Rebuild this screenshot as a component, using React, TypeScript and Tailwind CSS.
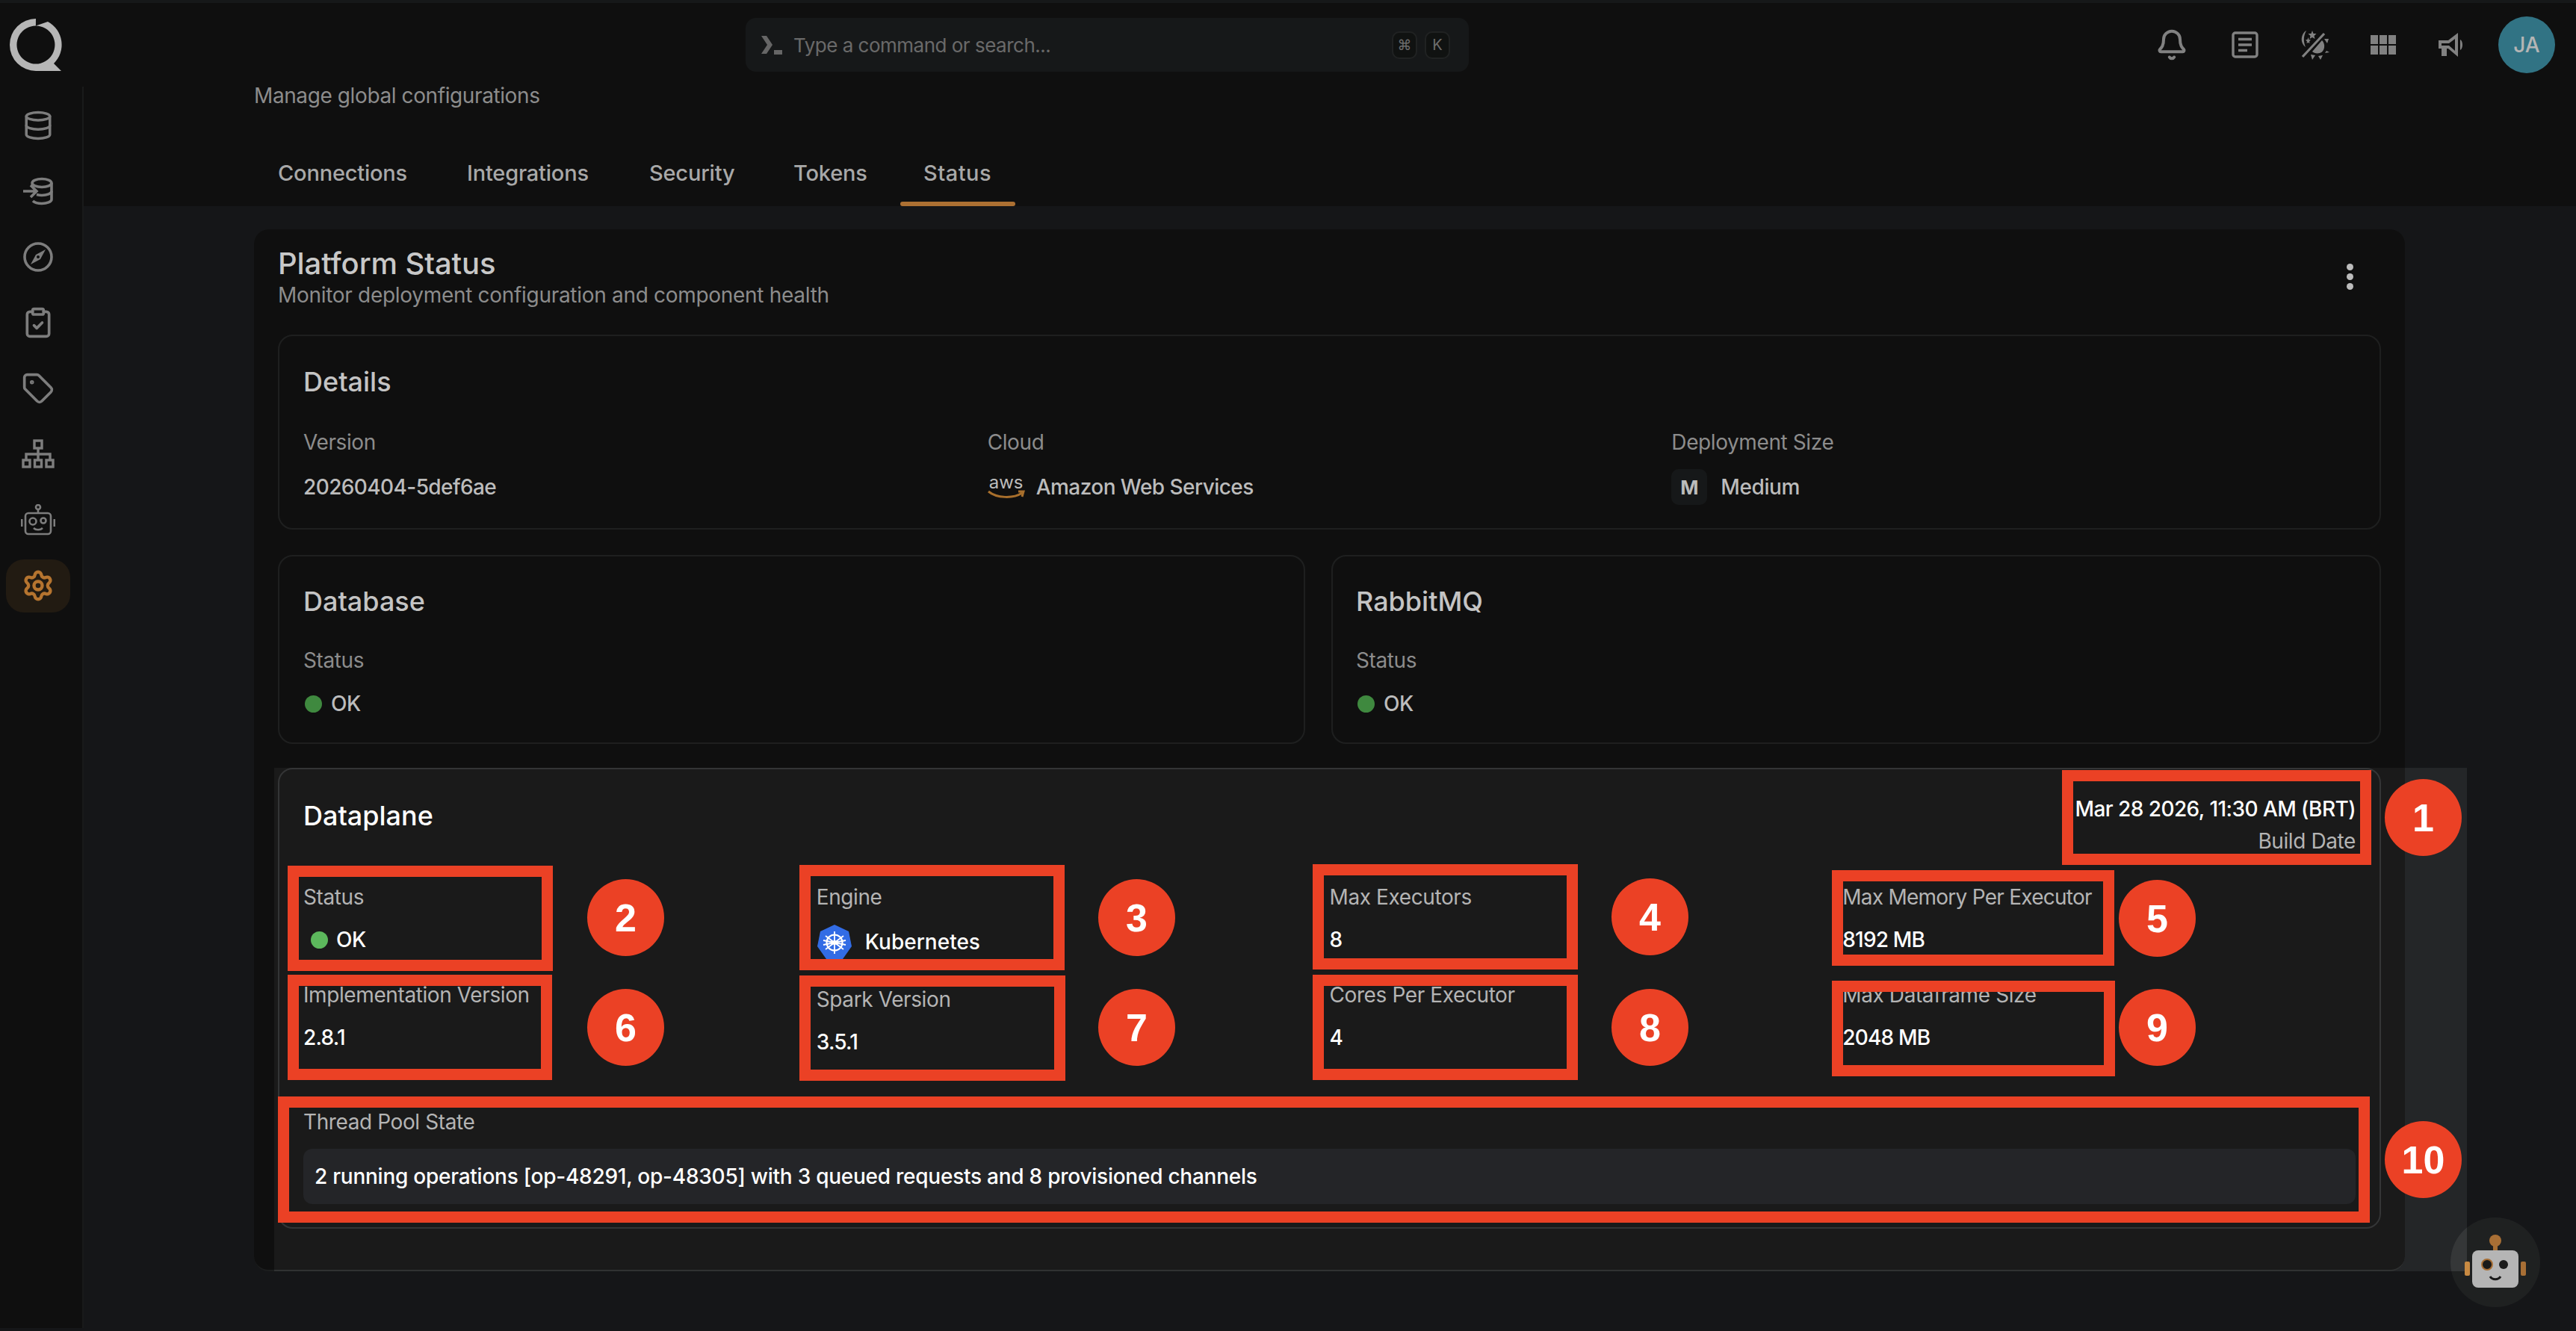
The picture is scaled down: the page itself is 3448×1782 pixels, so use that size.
import { Settings, Bell, ClipboardCheck, Tag, Database } from "lucide-react";

const boxes = [
  "left-[2760px] top-[1031px] w-[414px] h-[127px]",
  "left-[385px] top-[1159px] w-[355px] h-[141px]",
  "left-[1070px] top-[1158px] w-[355px] h-[141px]",
  "left-[1757px] top-[1157px] w-[355px] h-[141px]",
  "left-[2452px] top-[1165px] w-[378px] h-[128px]",
  "left-[385px] top-[1305px] w-[354px] h-[141px]",
  "left-[1070px] top-[1306px] w-[356px] h-[141px]",
  "left-[1757px] top-[1305px] w-[355px] h-[141px]",
  "left-[2452px] top-[1313px] w-[379px] h-[128px]",
  "left-[372px] top-[1468px] w-[2800px] h-[169px]",
];

const badges = [
  { n: "1", pos: "left-[3192px] top-[1043px]" },
  { n: "2", pos: "left-[786px] top-[1177px]" },
  { n: "3", pos: "left-[1470px] top-[1177px]" },
  { n: "4", pos: "left-[2157px] top-[1176px]" },
  { n: "5", pos: "left-[2836px] top-[1178px]" },
  { n: "6", pos: "left-[786px] top-[1324px]" },
  { n: "7", pos: "left-[1470px] top-[1324px]" },
  { n: "8", pos: "left-[2157px] top-[1324px]" },
  { n: "9", pos: "left-[2836px] top-[1324px]" },
  { n: "10", pos: "left-[3192px] top-[1501px]" },
];

const tabs = [
  { name: "Connections", cls: "w-[253px]" },
  { name: "Integrations", cls: "w-[244px]" },
  { name: "Security", cls: "w-[193px]" },
  { name: "Tokens", cls: "w-[175px]" },
];

const labelCls = "relative z-20 text-[28px] leading-[36px] text-[#8c8c8c] tracking-[-0.4px]";
const titleCls = "relative z-20 text-[36px] leading-[44px] font-medium text-[#c4c4c4]";
const valueCls = "relative z-20 text-[28px] font-medium text-[#bcbcbc]";
const planeLabelCls = "text-[28px] leading-[36px] text-[#b4b4b4] tracking-[-0.4px]";

function Logo() {
  return (
    <svg width="70" height="70" viewBox="0 0 70 70" className="relative z-20">
      <path d="M35 0 A35 35 0 0 0 35 70 L69 70 L59 60 A35 35 0 0 0 51 4 L35 9.5 A25.5 25.5 0 1 1 34.9 9.5 Z" fill="#b6b6b6" />
    </svg>
  );
}

function Ingest() {
  return (
    <svg width="40" height="38" viewBox="0 0 40 38" fill="none" stroke="#d0d0d0" strokeWidth="3.6">
      <ellipse cx="25" cy="8" rx="13" ry="5.5" />
      <path d="M38 8 V30 C38 33 32 35.5 25 35.5 C20 35.5 15 34 13 32" />
      <path d="M38 19 C38 22 32 24.5 25 24.5 C22 24.5 20 24 18 23.5" />
      <path d="M12 10 C12 11 13 12 15 13" />
      <path d="M0 19 H17 M10 11 L18 19 L10 27" />
    </svg>
  );
}

function CompassIcon() {
  return (
    <svg width="40" height="40" viewBox="0 0 40 40" fill="none">
      <circle cx="20" cy="20" r="18" stroke="#d0d0d0" strokeWidth="3.6" />
      <path d="M30 10 L23 23 L10 30 L17 17 Z" fill="#d0d0d0" />
      <circle cx="20" cy="20" r="2" fill="#1a1a1a" />
    </svg>
  );
}

function Tree() {
  return (
    <svg width="44" height="40" viewBox="0 0 44 40" fill="none">
      <g stroke="#d0d0d0" strokeWidth="3.4">
        <path d="M22 12 V27 M6 27 V20 H38 V27" />
        <rect x="17" y="2" width="10" height="10" />
        <rect x="2" y="28" width="9" height="9" />
        <rect x="17.5" y="28" width="9" height="9" />
        <rect x="33" y="28" width="9" height="9" />
      </g>
    </svg>
  );
}

function BotIcon() {
  return (
    <svg width="46" height="42" viewBox="0 0 46 42" fill="none" stroke="#d0d0d0" strokeWidth="2.6">
      <circle cx="23" cy="4" r="3" />
      <path d="M23 7 V12" />
      <rect x="6" y="12" width="34" height="28" rx="4" />
      <circle cx="16" cy="23" r="4.5" />
      <circle cx="30" cy="22" r="3.5" />
      <path d="M17 32 C20 35 26 35 29 32" />
      <path d="M1 20 V30 M45 20 V30" strokeWidth="3" />
    </svg>
  );
}

function NotesIcon() {
  return (
    <svg width="36" height="36" viewBox="0 0 36 36" fill="none">
      <rect x="2" y="2" width="32" height="32" rx="3" stroke="#d8d8d8" strokeWidth="3.4" />
      <path d="M9 10.5 H27 M9 18 H27 M9 25.5 H21" stroke="#d8d8d8" strokeWidth="3.6" />
    </svg>
  );
}

function ThemeIcon() {
  return (
    <svg width="42" height="40" viewBox="0 0 42 40" fill="none">
      <path d="M10 1 C3 5 1 17 9 23 C6 16 6 8 10 1 Z" fill="#d8d8d8" />
      <path d="M18 1 L19.5 5 L23.5 5 L20.5 8 L21.5 12 L18 10 L14.5 12 L15.5 8 L12.5 5 L16.5 5 Z" fill="#d8d8d8" />
      <path d="M12.5 10 L13.5 13 L16 13.5 L14 15.5 L14.5 18 L12.5 17 L10.5 18 L11 15.5 L9 13.5 L11.5 13 Z" fill="#d8d8d8" />
      <path d="M34 5 L5 36" stroke="#d8d8d8" strokeWidth="3.2" />
      <path d="M31 14 C36 19 35 29 28 31 C24 32 20 31 18 29 Z" fill="#d8d8d8" />
      <path d="M34 12 H40 L38 18 Z M37 28 L41 30 L35 31 Z M16 33 L22 34 L18 40 Z M26 35 L32 34 L29 40 Z" fill="#d8d8d8" />
    </svg>
  );
}

function GridIcon() {
  return (
    <div className="grid grid-cols-3 gap-[2px] w-[34px] h-[26px]">
      {[0, 1, 2, 3, 4, 5].map((i) => (
        <div key={i} className="bg-[#d8d8d8]" />
      ))}
    </div>
  );
}

function Megaphone() {
  return (
    <svg width="40" height="36" viewBox="0 0 40 36" fill="none">
      <path d="M3 12 H16 L29 2 V34 L16 23 H14 V33 H7 V23 H3 Z M7 16 V19 H17 L25 26 V10 L17 16 Z" fill="#d8d8d8" fillRule="evenodd" />
      <path d="M32 11 C36 13 36 23 32 25 Z" fill="#d8d8d8" />
    </svg>
  );
}

function Kube() {
  return (
    <svg width="48" height="48" viewBox="0 0 48 48" fill="none" className="shrink-0">
      <path d="M24 1 L43 10 L47 30 L35 47 L13 47 L1 30 L5 10 Z" fill="#326ce5" />
      <g stroke="#ffffff" strokeWidth="2.2">
        <circle cx="24" cy="25" r="10.5" />
        <path d="M24 10 V40 M12 16 L36 34 M36 16 L12 34 M9 28 L39 22 M39 28 L9 22" strokeWidth="1.8" />
      </g>
      <circle cx="24" cy="25" r="3" fill="#ffffff" />
    </svg>
  );
}

function Field({ label, value, tight }: { label: string; value: string; tight?: boolean }) {
  return (
    <div>
      <p className={tight ? "text-[28px] leading-[36px] text-[#b4b4b4] tracking-[-0.75px]" : planeLabelCls}>{label}</p>
      <p className="mt-[19px] text-[28px] leading-[40px] font-medium text-white tracking-[-0.8px]">{value}</p>
    </div>
  );
}

function DimStatus({ title, px }: { title: string; px: string }) {
  return (
    <div className={px}>
      <h2 className={titleCls}>{title}</h2>
      <p className={`mt-[39px] ${labelCls}`}>Status</p>
      <div className="mt-[20px] flex items-center h-[40px]">
        <span className="ml-[2px] w-[23px] h-[23px] rounded-full bg-[#69e569]" />
        <span className={`ml-[12px] tracking-[-0.4px] ${valueCls}`}>OK</span>
      </div>
    </div>
  );
}

export default function App() {
  return (
    <div className="relative w-[3448px] h-[1782px] overflow-hidden bg-[#242628] font-['Inter',sans-serif]">
      {/* Top bar */}
      <header className="h-[116px] border-t-4 border-[#26292b] bg-[#1a1a1a] flex items-center">
        <div className="ml-[13px]">
          <Logo />
        </div>
        <div className="ml-[915px] w-[968px] h-[72px] rounded-[14px] bg-[#26292a] flex items-center pl-[19px] pr-[25px]">
          <svg width="30" height="32" viewBox="0 0 30 32" fill="none">
            <path d="M2 4 H9 L17 16 L9 28 H2 L10 16 Z" fill="#ababab" />
            <rect x="19" y="23" width="11" height="6" fill="#ababab" />
          </svg>
          <span className="ml-[15px] text-[26px] text-[#b0b0b0] tracking-[-0.5px]">Type a command or search...</span>
          <div className="ml-auto flex gap-[10px]">
            <span className="w-[34px] h-[37px] rounded-[10px] border-2 border-[#36393a] bg-[#1c1e1d] flex items-center justify-center text-[19px] text-[#b4b4b4] font-['DejaVu_Sans',sans-serif]">⌘</span>
            <span className="w-[34px] h-[37px] rounded-[10px] border-2 border-[#36393a] bg-[#1c1e1d] flex items-center justify-center text-[20px] text-[#b4b4b4]">K</span>
          </div>
        </div>
        <div className="ml-auto flex items-center pr-[28px]">
          <Bell className="w-[44px] h-[46px] text-[#d8d8d8] mr-[58px]" strokeWidth={2.2} />
          <div className="mr-[54px]">
            <NotesIcon />
          </div>
          <div className="mr-[54px]">
            <ThemeIcon />
          </div>
          <div className="mr-[54px]">
            <GridIcon />
          </div>
          <div className="mr-[43px]">
            <Megaphone />
          </div>
          <div className="w-[76px] h-[76px] rounded-full bg-[#52c0dd] flex items-center justify-center">
            <span className="relative z-20 text-[28px] font-medium text-[#b5b5b5]">JA</span>
          </div>
        </div>
      </header>

      <div className="flex h-[1662px]">
        {/* Sidebar */}
        <aside className="w-[112px] shrink-0 bg-[#1a1a1a] border-r-2 border-[#2b2c2c] pt-[8px] pr-[8px] flex flex-col">
          <div className="h-[88px] flex items-center justify-center"><Database className="w-[42px] h-[42px] text-[#d0d0d0]" strokeWidth={2} /></div>
          <div className="h-[88px] flex items-center justify-center"><Ingest /></div>
          <div className="h-[88px] flex items-center justify-center"><CompassIcon /></div>
          <div className="h-[88px] flex items-center justify-center"><ClipboardCheck className="w-[44px] h-[44px] text-[#d0d0d0]" strokeWidth={2} /></div>
          <div className="h-[88px] flex items-center justify-center"><Tag className="w-[44px] h-[44px] text-[#d0d0d0]" strokeWidth={2} /></div>
          <div className="h-[88px] flex items-center justify-center"><Tree /></div>
          <div className="h-[88px] flex items-center justify-center"><BotIcon /></div>
          <div className="h-[88px] flex items-center justify-center">
            <div className="w-[86px] h-[71px] rounded-[24px] bg-[#3a2d1e] flex items-center justify-center">
              <Settings className="relative z-20 w-[44px] h-[44px] text-[#b5742f]" strokeWidth={2.4} />
            </div>
          </div>
        </aside>

        {/* Main */}
        <main className="flex-1">
          <div className="h-[160px] bg-[#1a1a1a] pl-[228px]">
            <p className={`leading-[24px] ${labelCls.replace("leading-[36px] ", "")}`}>Manage global configurations</p>
            <nav className="mt-[54px] flex">
              {tabs.map((t) => (
                <div key={t.name} className={`h-[76px] pl-[32px] flex items-center text-[29px] font-medium text-[#a8a8a8] tracking-[-0.2px] relative z-20 ${t.cls}`}>{t.name}</div>
              ))}
              <div className="w-[154px] relative z-20">
                <div className="h-[76px] pl-[31px] flex items-center text-[29px] font-medium text-[#a8a8a8] tracking-[0.5px]">Status</div>
                <div className="h-[6px] rounded-full bg-[#ac7032]" />
              </div>
            </nav>
          </div>

          <section className="mt-[31px] ml-[228px] w-[2879px] h-[1395px] rounded-[20px] bg-[#1a1a1a] border-b-2 border-[#303232] px-[32px] pt-[21px]">
            <div className="flex items-center justify-between h-[85px]">
              <div>
                <h1 className="relative z-20 text-[40px] leading-[48px] font-medium text-[#c8c8c8] tracking-[-0.1px]">Platform Status</h1>
                <p className="relative z-20 text-[28px] leading-[36px] text-[#8c8c8c] tracking-[-0.3px]">Monitor deployment configuration and component health</p>
              </div>
              <div className="mr-[37px] flex flex-col gap-[4px] relative z-20">
                <span className="w-[9px] h-[9px] rounded-full bg-[#bcbcbc]" />
                <span className="w-[9px] h-[9px] rounded-full bg-[#bcbcbc]" />
                <span className="w-[9px] h-[9px] rounded-full bg-[#bcbcbc]" />
              </div>
            </div>

            {/* Details */}
            <div className="mt-[35px] h-[261px] rounded-[20px] border-2 border-[#333535] px-[32px] pt-[39px]">
              <h2 className={titleCls}>Details</h2>
              <div className="mt-[41px] grid grid-cols-3">
                <div>
                  <p className={labelCls}>Version</p>
                  <p className="relative z-20 mt-[18px] h-[48px] flex items-center text-[28px] font-medium text-[#bcbcbc] tracking-[-0.6px]">20260404-5def6ae</p>
                </div>
                <div>
                  <p className={labelCls}>Cloud</p>
                  <div className="mt-[18px] h-[48px] flex items-center">
                    <div className="w-[50px] flex flex-col items-center relative z-20">
                      <span className="text-[24px] leading-[20px] text-[#bcbcbc]">aws</span>
                      <svg width="50" height="12" viewBox="0 0 50 12" fill="none">
                        <path d="M1 2 C12 11 34 12 46 4 M41 2 L48 2 L46 9" stroke="#a86f2c" strokeWidth="3" />
                      </svg>
                    </div>
                    <span className={`ml-[15px] tracking-[-0.55px] ${valueCls}`}>Amazon Web Services</span>
                  </div>
                </div>
                <div>
                  <p className={labelCls}>Deployment Size</p>
                  <div className="mt-[18px] h-[48px] flex items-center">
                    <span className="w-[48px] h-[48px] rounded-[10px] bg-[#26292a] flex items-center justify-center">
                      <span className="relative z-20 text-[26px] font-bold text-[#bcbcbc]">M</span>
                    </span>
                    <span className={`ml-[18px] tracking-[-0.4px] ${valueCls}`}>Medium</span>
                  </div>
                </div>
              </div>
            </div>

            {/* Database / RabbitMQ */}
            <div className="mt-[34px] flex gap-[35px]">
              <div className="w-[1375px] h-[253px] rounded-[20px] border-2 border-[#333535] pt-[38px]">
                <DimStatus title="Database" px="px-[32px]" />
              </div>
              <div className="flex-1 h-[253px] rounded-[20px] border-2 border-[#333535] pt-[38px]">
                <DimStatus title="RabbitMQ" px="px-[31px]" />
              </div>
            </div>

            {/* Dataplane */}
            <div className="mt-[32px] h-[617px] rounded-[20px] border-2 border-[#343536] px-[32px] pt-[33px]">
              <div className="flex items-start justify-between">
                <h2 className="mt-[7px] text-[36px] leading-[44px] font-medium text-white">Dataplane</h2>
                <div className="text-right">
                  <p className="text-[28px] leading-[40px] font-medium text-white tracking-[-0.55px]">Mar 28 2026, 11:30 AM (BRT)</p>
                  <p className={`mt-[5px] ${planeLabelCls}`}>Build Date</p>
                </div>
              </div>

              <div className="mt-[39px] grid grid-cols-4 items-start">
                <div className="flex flex-col gap-[36px]">
                  <div>
                    <p className={planeLabelCls}>Status</p>
                    <div className="mt-[19px] flex items-center h-[40px] pl-[10px]">
                      <span className="w-[23px] h-[23px] rounded-full bg-[#5cb85c]" />
                      <span className="text-[28px] font-medium text-white ml-[11px] tracking-[-0.4px]">OK</span>
                    </div>
                  </div>
                  <Field label="Implementation Version" value="2.8.1" />
                </div>
                <div className="flex flex-col gap-[36px]">
                  <div>
                    <p className={planeLabelCls}>Engine</p>
                    <div className="mt-[19px] flex items-center h-[46px]">
                      <Kube />
                      <span className="ml-[17px] text-[28px] font-medium text-white">Kubernetes</span>
                    </div>
                  </div>
                  <Field label="Spark Version" value="3.5.1" />
                </div>
                <div className="flex flex-col gap-[36px]">
                  <Field label="Max Executors" value="8" />
                  <Field label="Cores Per Executor" value="4" />
                </div>
                <div className="flex flex-col gap-[36px]">
                  <Field label="Max Memory Per Executor" value="8192 MB" tight />
                  <Field label="Max Dataframe Size" value="2048 MB" />
                </div>
              </div>

              <p className={`mt-[69px] ${planeLabelCls}`}>Thread Pool State</p>
              <div className="mt-[18px] h-[74px] w-[2747px] rounded-[12px] bg-[#242528] flex items-center pl-[15px] text-[28px] font-medium text-white tracking-[-0.25px]">
                2 running operations [op-48291, op-48305] with 3 queued requests and 8 provisioned channels
              </div>
            </div>
          </section>
        </main>
      </div>

      {/* Chat bot button */}
      <div className="absolute left-[3280px] top-[1630px] w-[120px] h-[120px] rounded-full bg-white/8 flex items-center justify-center">
        <svg width="84" height="76" viewBox="0 0 84 76" fill="none" className="relative z-20">
          <circle cx="42" cy="9" r="8" fill="#a86f35" />
          <rect x="39" y="14" width="6" height="8" fill="#a86f35" />
          <rect x="11" y="22" width="62" height="50" rx="8" fill="#b5b5b5" />
          <rect x="1" y="37" width="7" height="19" rx="2" fill="#c88a42" />
          <rect x="76" y="37" width="7" height="19" rx="2" fill="#a86f35" />
          <circle cx="31" cy="41" r="7" fill="#1a1a1a" stroke="#a86f35" strokeWidth="2" />
          <circle cx="53" cy="41" r="6" fill="#1a1a1a" />
          <path d="M35 57 C38 62 46 62 49 57" stroke="#1a1a1a" strokeWidth="3" />
        </svg>
      </div>

      {/* Spotlight dims everything outside the highlighted block */}
      <div className="absolute z-10 left-[367px] top-[1028px] w-[2935px] h-[674px] shadow-[0_0_0_4000px_rgba(0,0,0,0.4)]" />

      {/* Annotations */}
      {boxes.map((b) => (
        <div key={b} className={`absolute z-30 border-[15px] border-[#eb4125] ${b}`} />
      ))}
      {badges.map((b) => (
        <div key={b.n} className={`absolute z-30 w-[103px] h-[103px] rounded-full bg-[#eb4125] flex items-center justify-center text-[52px] font-bold text-white font-['Liberation_Sans',sans-serif] ${b.pos}`}>
          {b.n}
        </div>
      ))}
    </div>
  );
}
